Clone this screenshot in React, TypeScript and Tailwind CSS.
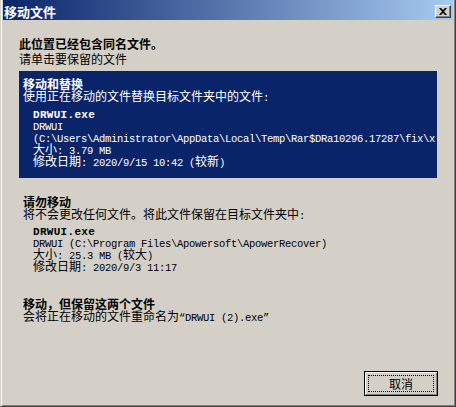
import React from "react";

const cjk = "font-['Noto_Sans_CJK_SC',sans-serif]";

function M({ children }: { children: React.ReactNode }) {
  return (
    <span className="font-['Liberation_Mono','Noto_Sans_CJK_SC',monospace] text-[10.5px] leading-[12px] tracking-[-0.3px]">
      {children}
    </span>
  );
}

function MB({ children }: { children: React.ReactNode }) {
  return (
    <span className="font-['Liberation_Mono','Noto_Sans_CJK_SC',monospace] text-[11px] leading-[12px] font-bold tracking-[0.3px]">
      {children}
    </span>
  );
}

function Line({ children, bold }: { children: React.ReactNode; bold?: boolean }) {
  return (
    <div
      className={
        bold
          ? "h-[12px] leading-[12px] whitespace-nowrap text-[12px] font-bold"
          : "h-[12px] leading-[12px] whitespace-nowrap text-[12px]"
      }
    >
      {children}
    </div>
  );
}

export default function App() {
  return (
    <div
      className={`${cjk} w-[456px] h-[407px] bg-[#d4d0c8] text-black flex flex-col border-l border-l-[#d4d0c8] border-r border-r-[#404040] border-b border-b-[#404040] px-[2px] pb-[1px] shadow-[inset_1px_0_#ffffff,inset_-1px_-1px_#808080] overflow-hidden`}
    >
      {/* Title bar */}
      <div className="h-[20px] flex bg-[linear-gradient(to_right,#0a246a,#a6caf0)]">
        <div className="pl-[1px] pt-[4px] text-[13px] leading-[16px] font-bold text-white whitespace-nowrap">
          移动文件
        </div>
        <div className="ml-auto mr-[2px] mt-[5px] w-[16px] h-[13px] bg-[#d4d0c8] border-t border-l border-t-white border-l-white border-r border-b border-r-[#404040] border-b-[#404040] shadow-[inset_-1px_-1px_#808080] flex items-center justify-center">
          <svg width="8" height="7" viewBox="0 0 8 7">
            <path d="M0 0 L2 0 L4 2 L6 0 L8 0 L5 3.5 L8 7 L6 7 L4 5 L2 7 L0 7 L3 3.5 Z" fill="#000" />
          </svg>
        </div>
      </div>

      {/* Content */}
      <div className="px-[16px] pt-[18px]">
        <Line bold>此位置已经包含同名文件。</Line>
        <div className="mt-[3px]">
          <Line>请单击要保留的文件</Line>
        </div>

        <div className="mt-[6px] bg-[#0a246a] text-white pl-[4px] pt-[7px] pb-[11px] overflow-hidden">
          <Line bold>移动和替换</Line>
          <Line>
            使用正在移动的文件替换目标文件夹中的文件<M>:</M>
          </Line>
          <div className="pl-[10px] mt-[5px]">
            <Line>
              <MB>DRWUI.exe</MB>
            </Line>
            <Line>
              <M>DRWUI</M>
            </Line>
            <Line>
              <M>(C:\Users\Administrator\AppData\Local\Temp\Rar$DRa10296.17287\fix\x</M>
            </Line>
            <Line>
              大小<M>: 3.79 MB</M>
            </Line>
            <Line>
              修改日期<M>: 2020/9/15 10:42 (</M>较新<M>)</M>
            </Line>
          </div>
        </div>

        <div className="px-[4px] mt-[18px]">
          <Line bold>请勿移动</Line>
          <Line>
            将不会更改任何文件。将此文件保留在目标文件夹中<M>:</M>
          </Line>
          <div className="pl-[10px] mt-[4px]">
            <Line>
              <MB>DRWUI.exe</MB>
            </Line>
            <Line>
              <M>DRWUI (C:\Program Files\Apowersoft\ApowerRecover)</M>
            </Line>
            <Line>
              大小<M>: 25.3 MB (</M>较大<M>)</M>
            </Line>
            <Line>
              修改日期<M>: 2020/9/3 11:17</M>
            </Line>
          </div>
        </div>

        <div className="px-[4px] mt-[26px]">
          <Line bold>移动，但保留这两个文件</Line>
          <Line>
            会将正在移动的文件重命名为<M>“DRWUI (2).exe”</M>
          </Line>
        </div>
      </div>

      {/* Footer */}
      <div className="mt-auto flex justify-end pr-[15px] pb-[9px]">
        <div className="w-[74px] h-[25px] border border-black bg-[#d4d0c8] shadow-[inset_1px_1px_#ffffff,inset_-1px_-1px_#808080] p-[3px]">
          <div className="w-full h-full border border-dotted border-black flex items-center justify-center text-[12px] leading-[12px]">
            取消
          </div>
        </div>
      </div>
    </div>
  );
}
